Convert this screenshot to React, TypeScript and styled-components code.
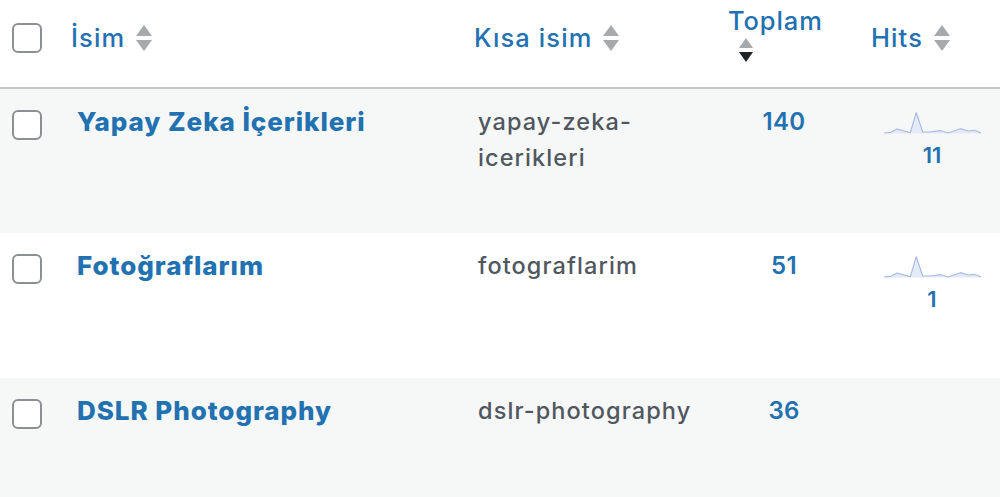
import React from "react";
import styled, { createGlobalStyle } from "styled-components";

const Global = createGlobalStyle`
  html, body { margin: 0; padding: 0; background: #ffffff; }
  body { font-family: Inter, "Noto Sans", "Liberation Sans", sans-serif; -webkit-font-smoothing: antialiased; }
  * { box-sizing: border-box; }
`;

const COLS = "61px 401px 258px 128px 152px";

const Table = styled.div`
  width: 1000px;
  display: flex;
  flex-direction: column;
`;

const HeaderRow = styled.div`
  display: grid;
  grid-template-columns: ${COLS};
  height: 89px;
  border-bottom: 2px solid #c3c4c7;
  background: #ffffff;
`;

const Row = styled.div<{ $alt: boolean; $h: number }>`
  display: grid;
  grid-template-columns: ${COLS};
  height: ${(p) => p.$h}px;
  background: ${(p) => (p.$alt ? "#f6f7f7" : "#ffffff")};
`;

const CheckCell = styled.div<{ $top: number }>`
  padding: ${(p) => p.$top}px 0 0 12px;
`;

const Box = styled.span`
  display: block;
  width: 30px;
  height: 30px;
  border: 2px solid #8c8f94;
  border-radius: 6px;
  background: #ffffff;
`;

const HeadCell = styled.div<{ $pl: number; $top: number }>`
  padding: ${(p) => p.$top}px 0 0 ${(p) => p.$pl}px;
`;

const HeadLink = styled.span`
  display: inline-flex;
  align-items: center;
  gap: 11px;
  font-size: 25.5px;
  line-height: 30px;
  font-weight: 500;
  color: #2271b1;
  letter-spacing: 1.1px;
`;

const StackLink = styled.span`
  display: flex;
  flex-direction: column;
  align-items: flex-start;
  gap: 2px;
  font-size: 25.5px;
  line-height: 30px;
  font-weight: 500;
  color: #2271b1;
  letter-spacing: 0.9px;
`;

const Indicators = styled.span<{ $ml?: number }>`
  display: flex;
  flex-direction: column;
  gap: 4px;
  margin-left: ${(p) => p.$ml ?? 0}px;
`;

const Tri = styled.span<{ $down?: boolean; $active?: boolean; $small?: boolean }>`
  width: 0;
  height: 0;
  border-left: ${(p) => (p.$small ? 7.5 : 8)}px solid transparent;
  border-right: ${(p) => (p.$small ? 7.5 : 8)}px solid transparent;
  ${(p) =>
    p.$down
      ? `border-top: ${p.$small ? 10 : 11}px solid ${p.$active ? "#1d2327" : "#a7aaad"};`
      : `border-bottom: ${p.$small ? 10 : 11}px solid #a7aaad;`}
`;

const NameCell = styled.div`
  padding: 15px 16px 0 16px;
  font-size: 26px;
  line-height: 36px;
  font-weight: 800;
  color: #2271b1;
  letter-spacing: 0.95px;
`;

const SlugCell = styled.div`
  padding: 15px 16px 0 16px;
  font-size: 23.5px;
  line-height: 36px;
  font-weight: 500;
  color: #50575e;
  letter-spacing: 1.1px;
`;

const CountCell = styled.div`
  padding: 15px 0 0 0;
  text-align: center;
  font-size: 24px;
  line-height: 36px;
  font-weight: 600;
  color: #2271b1;
  letter-spacing: 0.3px;
`;

const HitsCell = styled.div`
  padding: 20px 0 0 16px;
  display: flex;
  flex-direction: column;
  align-items: center;
`;

const HitsNum = styled.span`
  font-size: 22px;
  line-height: 30px;
  font-weight: 600;
  color: #2271b1;
  margin-top: 6px;
`;

const SortIcons = ({ active, ml, small }: { active?: boolean; ml?: number; small?: boolean }) => (
  <Indicators $ml={ml}>
    <Tri $small={small} />
    <Tri $down $active={active} $small={small} />
  </Indicators>
);

const pts: [number, number][] = [
  [0, 24], [7, 23.3], [13, 20], [26.3, 23.7], [32.3, 3.7], [38.7, 23], [45.3, 23],
  [57, 21.7], [64.3, 24], [76.3, 19.7], [84.3, 22], [90.3, 21.3], [97, 24],
];

const Spark = () => {
  const line = pts.map((p) => p.join(",")).join(" ");
  return (
    <svg width="97" height="25" viewBox="0 0 97 25" style={{ display: "block" }}>
      <polygon points={`${line} 97,24.5 0,24.5`} fill="#e4eaf8" />
      <polyline points={line} fill="none" stroke="#a9bce3" strokeWidth="1.2" strokeLinejoin="round" />
    </svg>
  );
};

const rows = [
  { name: "Yapay Zeka İçerikleri", slug: ["yapay-zeka-", "icerikleri"], count: "140", hits: "11", h: 144 },
  { name: "Fotoğraflarım", slug: ["fotograflarim"], count: "51", hits: "1", h: 145 },
  { name: "DSLR Photography", slug: ["dslr-photography"], count: "36", hits: null, h: 119 },
];

export default function App() {
  return (
    <>
      <Global />
      <Table>
        <HeaderRow>
          <CheckCell $top={23}>
            <Box />
          </CheckCell>
          <HeadCell $pl={10} $top={23}>
            <HeadLink>
              İsim <SortIcons />
            </HeadLink>
          </HeadCell>
          <HeadCell $pl={12} $top={23}>
            <HeadLink>
              Kısa isim <SortIcons />
            </HeadLink>
          </HeadCell>
          <HeadCell $pl={8} $top={6}>
            <StackLink>
              Toplam
              <SortIcons active small ml={11} />
            </StackLink>
          </HeadCell>
          <HeadCell $pl={23} $top={23}>
            <HeadLink>
              Hits <SortIcons />
            </HeadLink>
          </HeadCell>
        </HeaderRow>
        {rows.map((r, i) => (
          <Row key={r.name} $alt={i % 2 === 0} $h={r.h}>
            <CheckCell $top={21}>
              <Box />
            </CheckCell>
            <NameCell>{r.name}</NameCell>
            <SlugCell>
              {r.slug.map((s) => (
                <div key={s}>{s}</div>
              ))}
            </SlugCell>
            <CountCell>{r.count}</CountCell>
            <HitsCell>
              {r.hits && (
                <>
                  <Spark />
                  <HitsNum>{r.hits}</HitsNum>
                </>
              )}
            </HitsCell>
          </Row>
        ))}
      </Table>
    </>
  );
}
